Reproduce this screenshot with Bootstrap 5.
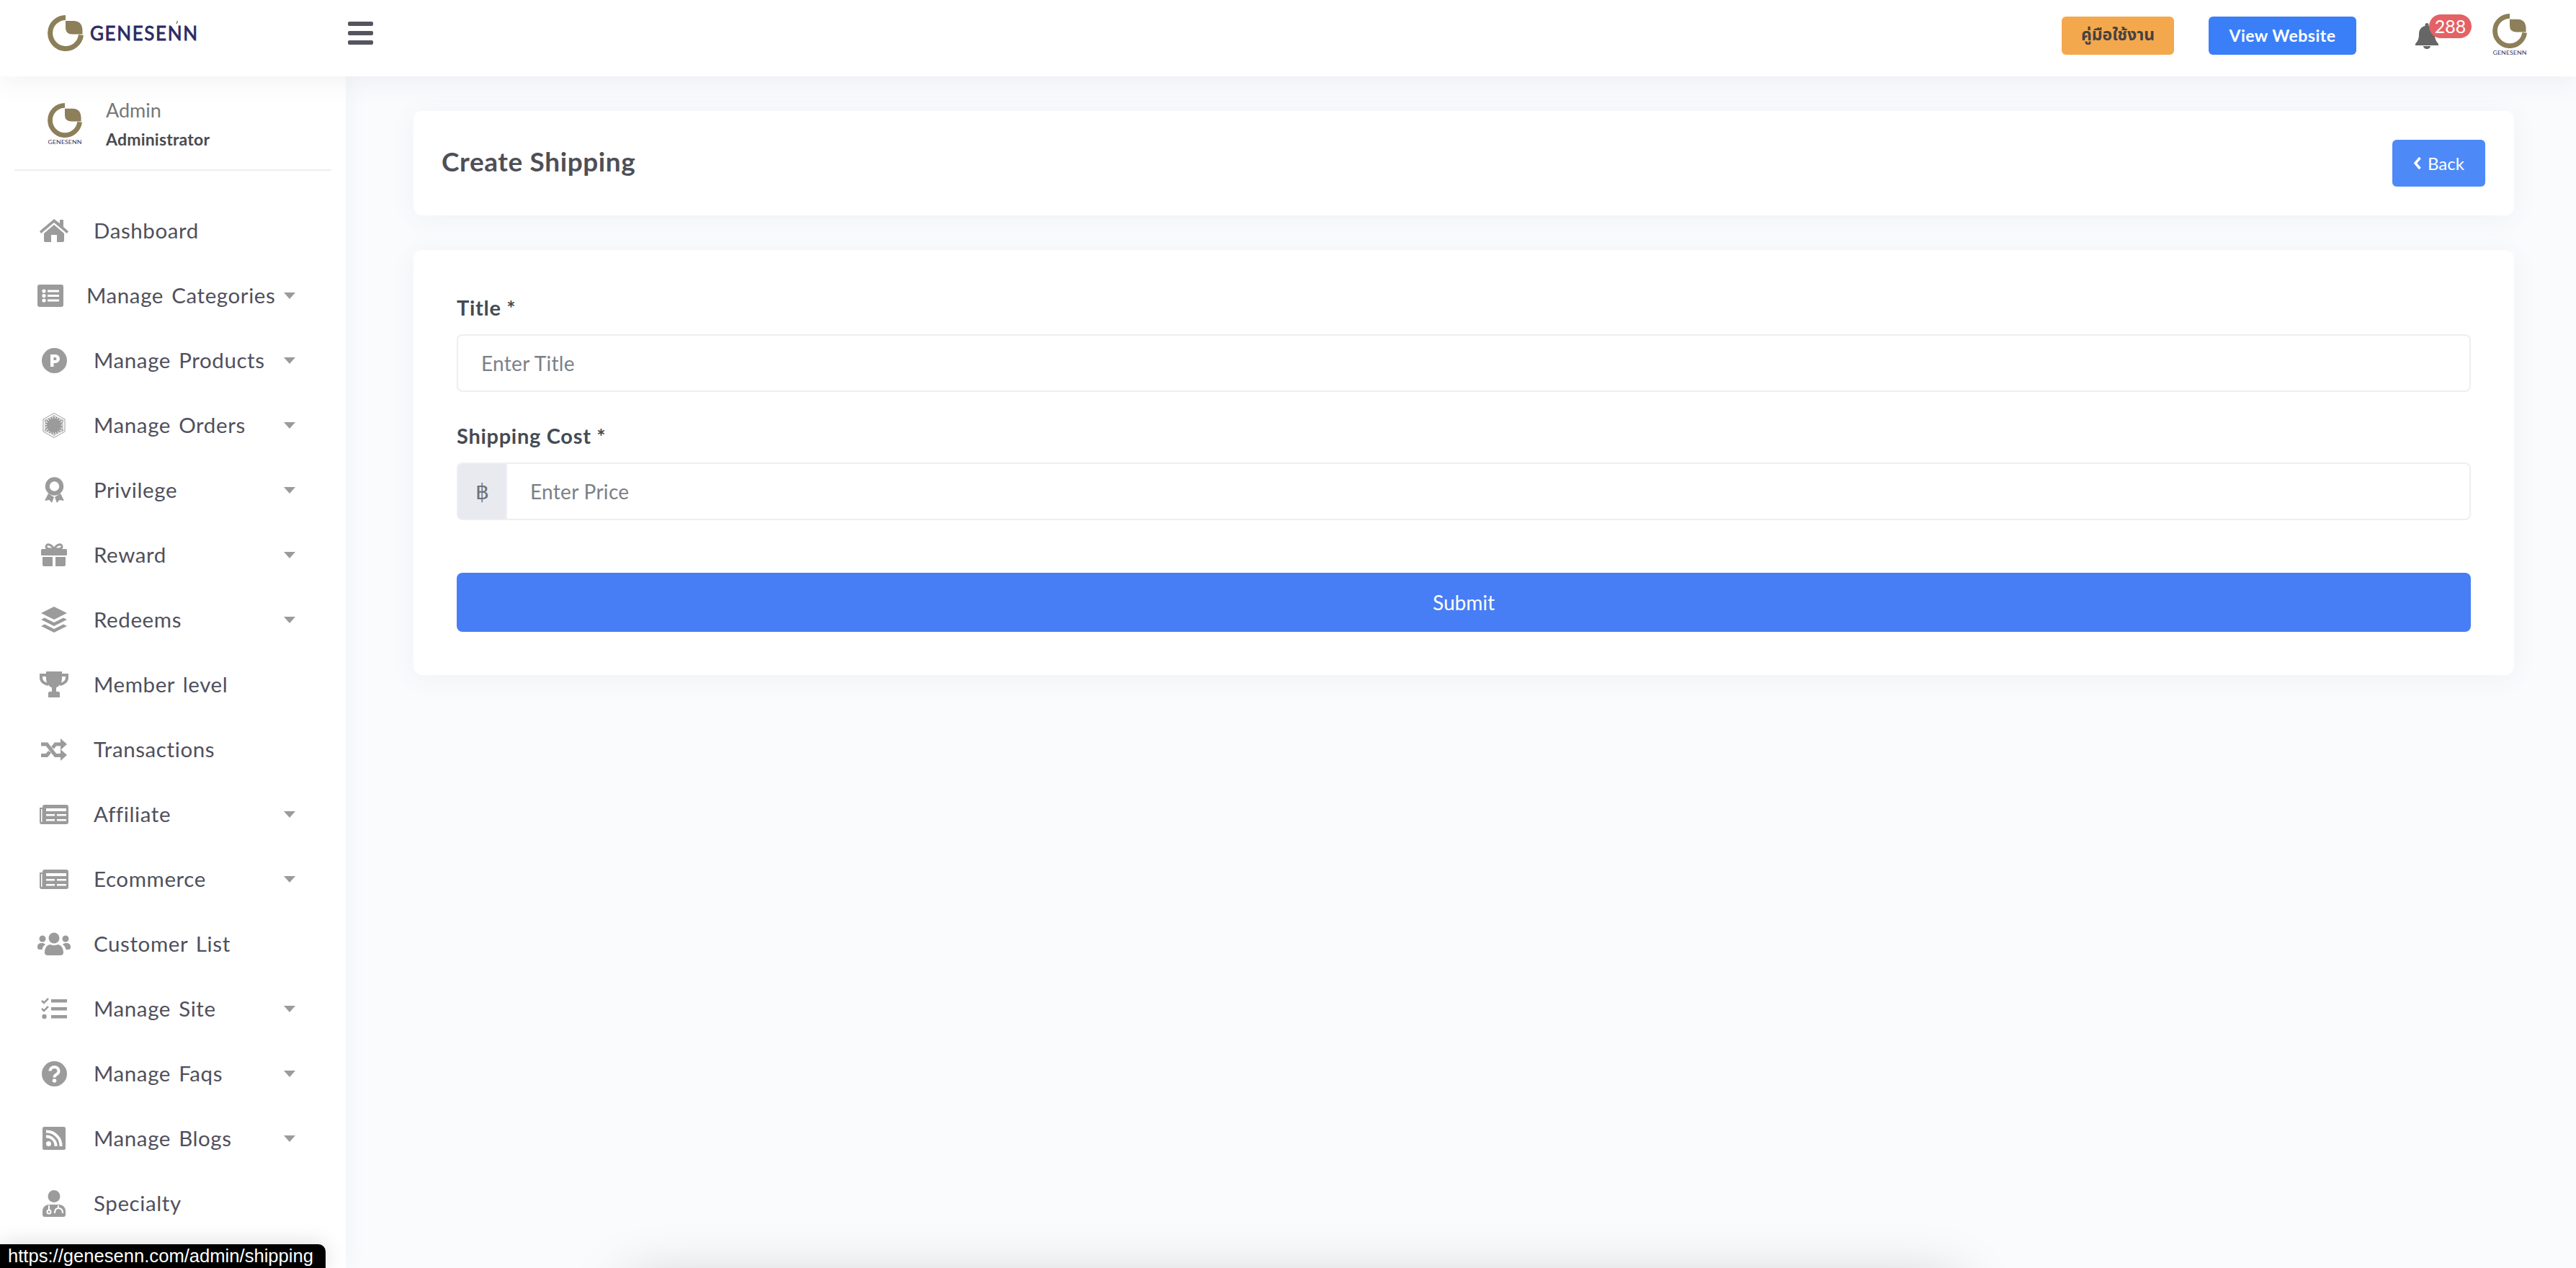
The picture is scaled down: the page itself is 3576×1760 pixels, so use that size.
<!DOCTYPE html>
<html>

<head>
  <meta charset="utf-8">
  <title>Create Shipping</title>
  <link href="https://cdn.jsdelivr.net/npm/bootstrap@5.3.2/dist/css/bootstrap.min.css" rel="stylesheet">
  <style>
    html, body { height: 1760px; overflow: hidden; }
    body { position: relative; background: #fafbfd; font-family: "Lato", "Noto Sans", sans-serif; color: #50505c; }
    .top-bar { height: 106px; padding: 0 68px 14px 66px; background: #fff; box-shadow: 0 4px 40px rgba(60, 60, 80, .08); position: relative; z-index: 3; }
    .brand-logo { width: 208px; height: 50px; margin-right: 209px; }
    .burger { width: 35px; height: 32px; }
    .burger span { height: 6px; background: #55555f; border-radius: 2px; }
    .top-right { margin-top: 7px; }
    .btn-guide, .btn-site { height: 53px; font-size: 23px; font-weight: 700; border-radius: 6px; border: 0; padding: 0; }
    .btn-guide { width: 156px; background: #f4a84e; color: #45423e; margin-right: 48px; font-family: "Noto Sans Thai", "Noto Sans", "DejaVu Sans", sans-serif; }
    .btn-site { width: 205px; background: #3b7ff8; color: #fff; margin-right: 82px; letter-spacing: .5px; }
    .bell-wrap { width: 32px; height: 36px; margin-top: 1px; margin-right: 75px; position: relative; }
    .bell-count { position: absolute; left: 19px; top: -12px; width: 59px; height: 33px; line-height: 33px; background: #e46165; color: #fff; border-radius: 17px; font-size: 25px; text-align: center; }
    .top-avatar { width: 48px; height: 58px; margin-top: -3px; }
    .page-row { height: 1654px; }
    .side-col { width: 480px; flex: none; background: #fff; box-shadow: 0 0 30px rgba(60, 60, 80, .05); position: relative; z-index: 2; }
    .side-user { height: 131px; margin: 0 20px; padding: 37px 0 0 46px; border-bottom: 2px solid #eeeeef; }
    .side-avatar { width: 48px; height: 58px; margin-right: 33px; }
    .user-name { font-size: 27px; color: #777; line-height: 32px; margin-top: -6px; }
    .user-role { font-size: 23px; font-weight: 700; color: #4a4a4f; line-height: 30px; margin-top: 9px; letter-spacing: .2px; }
    .side-menu { padding-top: 38px; }
    .side-link { height: 90px; padding: 0 70px 0 50px; font-size: 29.5px; color: #50505c; letter-spacing: .6px; word-spacing: 3px; }
    .side-link:hover { color: #50505c; }
    .menu-icon { width: 50px; margin-right: 30px; flex: none; fill: #9b9b9b; display: flex; justify-content: center; }
    .menu-icon.narrow { width: 40px; }
    .menu-caret { margin-left: auto; border-left: 8px solid transparent; border-right: 8px solid transparent; border-top: 9px solid #9b9b9b; }
    .main-col { padding: 48px 86px 0 94px; }
    .soft-card { border: 0; border-radius: 12px; box-shadow: 0 4px 36px rgba(80, 80, 110, .06); }
    .head-card { height: 145px; padding: 0 40px 0 39px; margin-bottom: 48px; }
    .head-card h1 { font-size: 37px; font-weight: 700; color: #4f4f56; margin: 0 0 4px; letter-spacing: .6px; }
    .btn-back { width: 129px; height: 65px; background: #4d8af8; border: 0; font-size: 24px; border-radius: 6px; padding: 0; }
    .form-card { height: 590px; padding: 60px; }
    .field-label { font-size: 29px; font-weight: 700; color: #444b54; line-height: 40px; margin-bottom: 17px; letter-spacing: .7px; }
    .field-input { height: 80px; font-size: 28px; border: 2px solid #eeeef3; border-radius: 8px; padding: 0 32px; letter-spacing: .3px; }
    .field-input::placeholder { color: #7b8087; }
    .field-gap { margin-bottom: 41px; }
    .baht-addon { width: 69px; height: 80px; justify-content: center; background: #e9eaef; border: 2px solid #eeeef3; border-right: 0; border-radius: 8px 0 0 8px; font-size: 30px; color: #6f7278; font-family: "DejaVu Sans", sans-serif; }
    .btn-submit { height: 82px; margin-top: 73px; background: #477ef5; border: 0; border-radius: 8px; font-size: 28px; }
    .status-tip { position: absolute; left: 0; bottom: 0; width: 452px; height: 33px; padding-left: 11px; background: #000; color: #fff; font: 25.6px/33px "Liberation Sans", sans-serif; border-top-right-radius: 10px; box-shadow: 0 0 30px rgba(0, 0, 0, .15); z-index: 5; white-space: nowrap; }
    .shadow-clip { position: absolute; left: 0; right: 0; bottom: 0; height: 120px; overflow: hidden; }
    .off-shadow { position: absolute; left: 880px; width: 1830px; top: 150px; height: 40px; box-shadow: 0 0 80px 10px rgba(0, 0, 0, .22); }
  </style>
</head>

<body>
  <svg width="0" height="0" class="position-absolute">
    <symbol id="ring" viewBox="0 0 100 100">
      <path d="M50 7 A43 43 0 1 0 93 55" fill="none" stroke="#8c7f59" stroke-width="14" />
      <path d="M50 16 H72 Q97 16 97 44 V53 H68 Q50 53 50 35z" fill="#8c7f59" />
    </symbol>
  </svg>

  <nav class="navbar top-bar d-flex align-items-center flex-nowrap">
    <div class="d-flex align-items-center">
      <svg class="brand-logo" viewBox="0 0 208 50">
        <use href="#ring" x="0" y="0" width="50" height="50" />
        <text x="59" y="35" font-size="26" textLength="149" lengthAdjust="spacing" fill="#2b2a63" stroke="#2b2a63" stroke-width=".8" font-family="Lato, sans-serif">GENESENN</text>
        <path d="M179 12 l1.500 -4" stroke="#8c7f59" stroke-width="1.500" />
      </svg>
      <a class="burger d-flex flex-column justify-content-between" href="#"><span></span><span></span><span></span></a>
    </div>
    <div class="top-right d-flex align-items-center">
      <button class="btn btn-guide" type="button">คู่มือใช้งาน</button>
      <button class="btn btn-site" type="button">View Website</button>
      <div class="bell-wrap">
        <svg width="32" height="36" viewBox="0 0 32 36" fill="#666">
          <path d="M16 0 a2.5 2.5 0 0 1 2.500 2.500 V4 C24 5 27 10 27 15 C27 23 29 25 32 29 V31 H0 V29 C3 25 5 23 5 15 C5 10 8 5 13.500 4 V2.500 A2.500 2.500 0 0 1 16 0z" />
          <path d="M11 32 H21 A5 4 0 0 1 11 32z" />
        </svg>
        <span class="bell-count">288</span>
      </div>
      <svg class="top-avatar" viewBox="0 0 48 58">
        <use href="#ring" x="0" y="0" width="48" height="48" />
        <text x="24" y="57" text-anchor="middle" font-size="8.4" textLength="47" lengthAdjust="spacingAndGlyphs" fill="#3b3a6b" font-family="Lato, sans-serif">GENESENN</text>
      </svg>
    </div>
  </nav>

  <div class="page-row d-flex">
    <aside class="side-col">
      <div class="side-user d-flex">
        <svg class="side-avatar flex-shrink-0" viewBox="0 0 48 58">
          <use href="#ring" x="0" y="0" width="48" height="48" />
          <text x="24" y="57" text-anchor="middle" font-size="8.4" textLength="47" lengthAdjust="spacingAndGlyphs" fill="#3b3a6b" font-family="Lato, sans-serif">GENESENN</text>
        </svg>
        <div>
          <div class="user-name">Admin</div>
          <div class="user-role">Administrator</div>
        </div>
      </div>
      <div class="nav flex-column side-menu">
        <a class="nav-link side-link d-flex align-items-center" href="#">
          <span class="menu-icon"><svg width="40" height="32" viewBox="0 0 40 32"><path d="M20 0 L0 17 l2 3 L20 5 l18 15 2-3 -7-6 V1 h-5 v5z" /><path d="M6 20 L20 8 L34 20 V30 a2 2 0 0 1 -2 2 H24 V22 H16 V32 H8 a2 2 0 0 1 -2-2z" /></svg></span>Dashboard
        </a>
        <a class="nav-link side-link d-flex align-items-center" href="#">
          <span class="menu-icon narrow"><svg width="36" height="31" viewBox="0 0 36 31"><rect width="36" height="31" rx="3" /><g fill="#fff"><circle cx="9" cy="9" r="2.600" /><circle cx="9" cy="15.500" r="2.600" /><circle cx="9" cy="22" r="2.600" /><rect x="14" y="7.500" width="16" height="3" /><rect x="14" y="14" width="16" height="3" /><rect x="14" y="20.500" width="16" height="3" /></g></svg></span>Manage Categories<span class="menu-caret"></span>
        </a>
        <a class="nav-link side-link d-flex align-items-center" href="#">
          <span class="menu-icon"><svg width="35" height="35" viewBox="0 0 35 35"><circle cx="17.500" cy="17.500" r="17.500" /><path d="M12 9 H19 a5.500 5.500 0 0 1 0 12 H16.500 V26 H12z M16.500 13 V17 H18.500 a2 2 0 0 0 0-4z" fill="#fff" fill-rule="evenodd" /></svg></span>Manage Products<span class="menu-caret"></span>
        </a>
        <a class="nav-link side-link d-flex align-items-center" href="#">
          <span class="menu-icon"><svg width="32" height="35" viewBox="0 0 32 35"><path d="M16 .5 L31 9 V26 L16 34.500 L1 26 V9z" fill="none" stroke="#9b9b9b" /><path d="M16 3 L29 10 V25 L16 32 L3 25 V10z" /><circle cx="16" cy="17.500" r="11" fill="none" stroke="#fff" stroke-width="2.500" stroke-dasharray="1 2.500" /><circle cx="16" cy="17.500" r="13" fill="none" stroke="#fff" stroke-width=".8" /></svg></span>Manage Orders<span class="menu-caret"></span>
        </a>
        <a class="nav-link side-link d-flex align-items-center" href="#">
          <span class="menu-icon"><svg width="27" height="36" viewBox="0 0 27 36"><circle cx="13.500" cy="13" r="9.700" fill="none" stroke="#9b9b9b" stroke-width="6" /><path d="M5 23 L0 33 l6.500 -1 3.500 4 3-8z M22 23 L27 33 l-6.500 -1 -3.500 4 -3-8z" /></svg></span>Privilege<span class="menu-caret"></span>
        </a>
        <a class="nav-link side-link d-flex align-items-center" href="#">
          <span class="menu-icon"><svg width="36" height="32" viewBox="0 0 36 32"><path d="M18 8 C14 1 7 0 7 5 C7 8 11 8 18 8 C25 8 29 8 29 5 C29 0 22 1 18 8z" fill="none" stroke="#9b9b9b" stroke-width="3" /><rect y="8" width="36" height="9" rx="1.500" /><path d="M2 19 H16 V32 H4 a2 2 0 0 1 -2-2z M20 19 H34 V30 a2 2 0 0 1 -2 2 H20z" /></svg></span>Reward<span class="menu-caret"></span>
        </a>
        <a class="nav-link side-link d-flex align-items-center" href="#">
          <span class="menu-icon"><svg width="36" height="36" viewBox="0 0 36 36"><path d="M18 0 L36 9 L18 18 L0 9z" /><path d="M0 18 L5 15.500 L18 22 L31 15.500 L36 18 L18 27z" /><path d="M0 27 L5 24.500 L18 31 L31 24.500 L36 27 L18 36z" /></svg></span>Redeems<span class="menu-caret"></span>
        </a>
        <a class="nav-link side-link d-flex align-items-center" href="#">
          <span class="menu-icon"><svg width="40" height="36" viewBox="0 0 40 36"><path d="M9 0 H31 V10 C31 17 26 21 23 22.500 V28 H26 a2 2 0 0 1 2 2 V36 H12 V30 a2 2 0 0 1 2-2 H17 V22.500 C14 21 9 17 9 10z" /><path d="M9 5 H2 V9 C2 14 7 17 12 18 M31 5 H38 V9 C38 14 33 17 28 18" fill="none" stroke="#9b9b9b" stroke-width="4" /></svg></span>Member level
        </a>
        <a class="nav-link side-link d-flex align-items-center" href="#">
          <span class="menu-icon"><svg width="36" height="31" viewBox="0 0 36 31"><path d="M0 8 H8 L20 23.500 H28 M0 23.500 H8 L12 18.500 M16 13 L20 8 H28" fill="none" stroke="#9b9b9b" stroke-width="5" /><path d="M27 0 L36 8 L27 16z M27 15 L36 23 L27 31z" /></svg></span>Transactions
        </a>
        <a class="nav-link side-link d-flex align-items-center" href="#">
          <span class="menu-icon"><svg width="40" height="27" viewBox="0 0 40 27"><path d="M4 3 a3 3 0 0 1 3-3 H37 a3 3 0 0 1 3 3 V24 a3 3 0 0 1 -3 3 H3 a3 3 0 0 1 -3-3 V4 H4z" /><g fill="#fff"><rect x="2" y="6" width="1.500" height="18" /><rect x="9" y="5" width="28" height="4" /><rect x="9" y="13" width="12" height="2.500" /><rect x="24" y="13" width="13" height="2.500" /><rect x="9" y="20" width="12" height="2.500" /><rect x="24" y="20" width="13" height="2.500" /></g></svg></span>Affiliate<span class="menu-caret"></span>
        </a>
        <a class="nav-link side-link d-flex align-items-center" href="#">
          <span class="menu-icon"><svg width="40" height="27" viewBox="0 0 40 27"><path d="M4 3 a3 3 0 0 1 3-3 H37 a3 3 0 0 1 3 3 V24 a3 3 0 0 1 -3 3 H3 a3 3 0 0 1 -3-3 V4 H4z" /><g fill="#fff"><rect x="2" y="6" width="1.500" height="18" /><rect x="9" y="5" width="28" height="4" /><rect x="9" y="13" width="12" height="2.500" /><rect x="24" y="13" width="13" height="2.500" /><rect x="9" y="20" width="12" height="2.500" /><rect x="24" y="20" width="13" height="2.500" /></g></svg></span>Ecommerce<span class="menu-caret"></span>
        </a>
        <a class="nav-link side-link d-flex align-items-center" href="#">
          <span class="menu-icon"><svg width="46" height="32" viewBox="0 0 46 32"><circle cx="23" cy="8" r="7.500" /><circle cx="7" cy="9" r="4.500" /><circle cx="39" cy="9" r="4.500" /><path d="M10 28 C10 20 15 17 18 17 C20 18.500 26 18.500 28 17 C31 17 36 20 36 28 a4 4 0 0 1 -4 4 H14 a4 4 0 0 1 -4-4z" /><path d="M0 20 C0 16 3 15 6 15 C8 15 9.500 15.500 11 17 C8 19 7 21 6.500 24 H3 a3 3 0 0 1 -3-4z M46 20 C46 16 43 15 40 15 C38 15 36.500 15.500 35 17 C38 19 39 21 39.500 24 H43 a3 3 0 0 0 3-4z" /></svg></span>Customer List
        </a>
        <a class="nav-link side-link d-flex align-items-center" href="#">
          <span class="menu-icon"><svg width="36" height="30" viewBox="0 0 36 30"><path d="M1 4 L4 7 L10 1 M1 15 L4 18 L10 12" fill="none" stroke="#9b9b9b" stroke-width="2.500" /><circle cx="4.500" cy="26" r="3.200" /><rect x="14" y="2" width="22" height="4.500" /><rect x="14" y="13" width="22" height="4.500" /><rect x="14" y="24" width="22" height="4.500" /></svg></span>Manage Site<span class="menu-caret"></span>
        </a>
        <a class="nav-link side-link d-flex align-items-center" href="#">
          <span class="menu-icon"><svg width="35" height="35" viewBox="0 0 35 35"><circle cx="17.500" cy="17.500" r="17.500" /><path d="M11.500 13.500 a6 5.500 0 1 1 9 4.800 c-2 1.200 -3 2 -3 4.200" fill="none" stroke="#fff" stroke-width="4" /><circle cx="17.500" cy="27" r="2.800" fill="#fff" /></svg></span>Manage Faqs<span class="menu-caret"></span>
        </a>
        <a class="nav-link side-link d-flex align-items-center" href="#">
          <span class="menu-icon"><svg width="32" height="32" viewBox="0 0 32 32"><rect width="32" height="32" rx="2.500" /><circle cx="8.500" cy="23.500" r="3.500" fill="#fff" /><path d="M5 13.500 A13 13 0 0 1 18.500 27 M5 6.500 A20 20 0 0 1 25.500 27" fill="none" stroke="#fff" stroke-width="4" /></svg></span>Manage Blogs<span class="menu-caret"></span>
        </a>
        <a class="nav-link side-link d-flex align-items-center" href="#">
          <span class="menu-icon"><svg width="32" height="37" viewBox="0 0 32 37"><circle cx="16" cy="8.500" r="8.500" /><path d="M0 29 C0 24 4 20 9 20 H23 C28 20 32 24 32 29 V34 a3 3 0 0 1 -3 3 H3 a3 3 0 0 1 -3-3z" /><g fill="none" stroke="#fff" stroke-width="2"><circle cx="9" cy="30" r="2.500" /><path d="M9 27 V21 M22 21 V25 C26 25 28 27 28 32 M22 25 C19 25 17 27 17 32" /></g></svg></span>Specialty
        </a>
      </div>
    </aside>

    <main class="main-col flex-grow-1">
      <div class="card soft-card head-card d-flex flex-row align-items-center justify-content-between">
        <h1>Create Shipping</h1>
        <button class="btn btn-primary btn-back d-flex align-items-center justify-content-center gap-2" type="button">
          <svg width="12" height="19" viewBox="0 0 12 19"><path d="M9.500 2 L3 9.500 L9.500 17" fill="none" stroke="#fff" stroke-width="3.500" /></svg>Back
        </button>
      </div>
      <form class="card soft-card form-card">
        <div class="field-gap">
          <label class="form-label field-label d-block" for="titleInput">Title *</label>
          <input id="titleInput" class="form-control field-input" type="text" placeholder="Enter Title">
        </div>
        <div>
          <label class="form-label field-label d-block" for="priceInput">Shipping Cost *</label>
          <div class="input-group">
            <span class="input-group-text baht-addon">฿</span>
            <input id="priceInput" class="form-control field-input" type="text" placeholder="Enter Price">
          </div>
        </div>
        <button class="btn btn-primary btn-submit w-100" type="submit">Submit</button>
      </form>
    </main>
  </div>

  <div class="shadow-clip"><div class="off-shadow"></div></div>
  <div class="status-tip">https://genesenn.com/admin/shipping</div>

  <script src="https://cdn.jsdelivr.net/npm/bootstrap@5.3.2/dist/js/bootstrap.bundle.min.js"></script>
</body>

</html>
